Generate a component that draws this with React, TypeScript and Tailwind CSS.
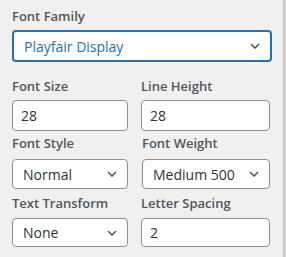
import { ChangeEvent, useState } from 'react';

const font = "font-['Open_Sans','Noto_Sans',sans-serif]";

function Chevron() {
  return (
    <svg width="10" height="6" viewBox="0 0 10 6" className="shrink-0">
      <polyline points="1,1 5,5 9,1" fill="none" stroke="#50575e" strokeWidth="1.6" />
    </svg>
  );
}

function Label({ children }: { children: string }) {
  return <div className="text-[13px] leading-[18px] font-semibold text-[#50575e]">{children}</div>;
}

function SelectBox({ value, focused, className }: { value: string; focused?: boolean; className: string }) {
  return (
    <div
      className={`flex items-center justify-between rounded-[4px] bg-white pl-[10px] pr-[10px] text-[14px] ${className} ${
        focused ? 'border-2 border-[#2271b1] text-[#2271b1]' : 'border border-[#8c8f94] text-[#2c3338]'
      }`}
    >
      <span>{value}</span>
      <Chevron />
    </div>
  );
}

function TextBox({ value, className }: { value: string; className: string }) {
  const [v, setV] = useState(value);
  return (
    <input
      value={v}
      onChange={(e: ChangeEvent<HTMLInputElement>) => setV(e.target.value)}
      className={`rounded-[4px] border border-[#8c8f94] bg-white px-[8px] text-[14px] text-[#2c3338] outline-none ${className}`}
    />
  );
}

export default function App() {
  return (
    <div className={`flex h-[257px] w-[286px] bg-[#f0f0f1] ${font}`}>
      <div className="w-[283px] pl-[12px] pt-[7px]">
        <Label>Font Family</Label>
        <SelectBox value="Playfair Display" focused className="mt-[5px] h-[32px] w-[260px] pl-[10px]" />

        <div className="mt-[15px] flex gap-[13px]">
          <div className="w-[116px]">
            <Label>Font Size</Label>
            <TextBox value="28" className="mt-[5px] h-[31px] w-[116px]" />
          </div>
          <div className="w-[129px]">
            <Label>Line Height</Label>
            <TextBox value="28" className="mt-[5px] h-[31px] w-[129px]" />
          </div>
        </div>

        <div className="mt-[3px] flex gap-[14px]">
          <div className="w-[116px]">
            <Label>Font Style</Label>
            <SelectBox value="Normal" className="mt-[7px] h-[30px] w-[116px]" />
          </div>
          <div className="w-[128px]">
            <Label>Font Weight</Label>
            <SelectBox value="Medium 500" className="mt-[7px] h-[30px] w-[128px]" />
          </div>
        </div>

        <div className="mt-[5px] flex gap-[13px]">
          <div className="w-[116px]">
            <Label>Text Transform</Label>
            <SelectBox value="None" className="mt-[6px] h-[29px] w-[116px]" />
          </div>
          <div className="w-[129px]">
            <Label>Letter Spacing</Label>
            <TextBox value="2" className="mt-[6px] h-[29px] w-[129px]" />
          </div>
        </div>
      </div>
      <div className="w-[2px] bg-[#c9c9ca]" />
      <div className="w-[1px] bg-[#e2e2e3]" />
    </div>
  );
}
